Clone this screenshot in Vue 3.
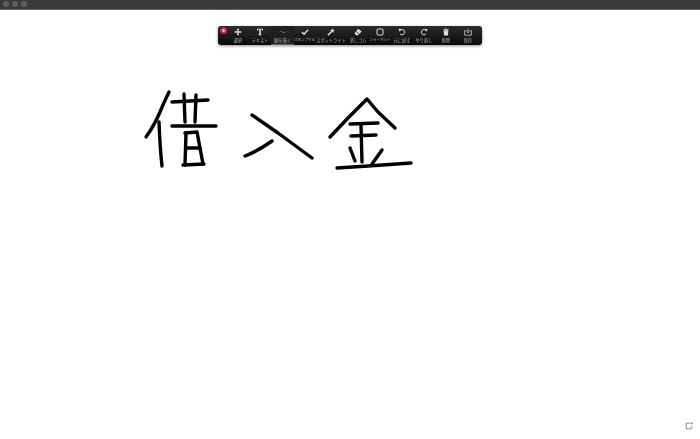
<script setup>
const tools = [
  { label: '選択', w: 22, icon: 'move' },
  { label: 'テキスト', w: 22, icon: 'text' },
  { label: '線を描く', w: 23, icon: 'draw', active: true },
  { label: 'スタンプする', w: 21, icon: 'check', size: 3.5 },
  { label: 'スポットライト', w: 32, icon: 'wand' },
  { label: '消しゴム', w: 22, icon: 'eraser' },
  { label: 'フォーマット', w: 22, icon: 'format', size: 3.5 },
  { label: '元に戻す', w: 22, icon: 'undo' },
  { label: 'やり直し', w: 22, icon: 'redo' },
  { label: '削除', w: 22, icon: 'trash' },
  { label: '保存', w: 22, icon: 'save' },
]
const strokes = [
  'M169 92 Q164 102 160 112 Q154 126 146 137',
  'M159 122 Q160 148 162 166',
  'M172 102 L208 100',
  'M184 94 L185 122',
  'M196 95 L195 122',
  'M172 126 L216 126',
  'M186 133 L185 165',
  'M185 133 L197 132 L203 164',
  'M187 148 L200 148',
  'M183 165 L204 164',
  'M252 115 L278 133 L312 158',
  'M245 156 Q258 151 272 141',
  'M330 137 L348 118 L367 99 L378 112 L395 128',
  'M350 124 L378 123',
  'M351 136 L376 135',
  'M361 125 L362 162',
  'M350 148 L355 161',
  'M382 150 L372 164',
  'M337 168 L368 166 L411 163',
]
</script>

<template>
  <div class="page">
    <header class="titlebar">
      <span class="light"></span>
      <span class="light"></span>
      <span class="light"></span>
    </header>
    <main class="board">
      <svg class="ink" viewBox="0 0 700 439" width="700" height="439">
        <path v-for="(d, i) in strokes" :key="i" :d="d" />
      </svg>
      <nav class="toolbar">
        <span class="rec"></span>
        <div
          v-for="t in tools"
          :key="t.label"
          class="tool"
          :class="{ active: t.active }"
          :style="{ width: t.w + 'px' }"
        >
          <svg class="icon" viewBox="0 0 12 12" width="8" height="8">
            <path v-if="t.icon === 'move'" class="fill" d="M6 0.5 L8 3 L7 3 L7 5 L9 5 L9 4 L11.5 6 L9 8 L9 7 L7 7 L7 9 L8 9 L6 11.5 L4 9 L5 9 L5 7 L3 7 L3 8 L0.5 6 L3 4 L3 5 L5 5 L5 3 L4 3 Z" />
            <path v-else-if="t.icon === 'text'" class="fill" d="M1.5 1 L10.5 1 L10.5 4 L9.6 4 C9.4 2.8 9 2.3 7.2 2.3 L7.2 9.5 L8.5 10.2 L8.5 11 L3.5 11 L3.5 10.2 L4.8 9.5 L4.8 2.3 C3 2.3 2.6 2.8 2.4 4 L1.5 4 Z" />
            <path v-else-if="t.icon === 'draw'" class="line blue" d="M0.5 6.5 C2 4.5 3.5 4.5 5 6 C6.5 7.5 8.5 7.5 11.5 5" />
            <path v-else-if="t.icon === 'check'" class="line thick" d="M1.5 6.2 L4.6 9.4 L10.5 2.5" />
            <g v-else-if="t.icon === 'wand'">
              <path class="line thick" d="M1.5 11 L6.5 5.5" />
              <path class="fill" d="M8 0.5 L9 2.6 L11.5 3 L9.7 4.7 L10 7 L8 6 L6 7 L6.4 4.6 L4.6 3 L7 2.6 Z" />
            </g>
            <g v-else-if="t.icon === 'eraser'">
              <path class="fill" d="M6.5 1 L11.5 5.2 L8 9 L3 5 Z" />
              <path class="fill dim" d="M2.5 5.5 L7.2 9.6 L6 10.8 L3.6 10.8 L0.8 7.8 Z" />
            </g>
            <rect v-else-if="t.icon === 'format'" class="line" x="1.5" y="1.5" width="9" height="9" rx="1.5" />
            <g v-else-if="t.icon === 'undo'">
              <path class="line" d="M3 3.5 A4 4 0 1 1 3 9" />
              <path class="fill" d="M0.8 1.2 L5.2 2 L2 5.6 Z" />
            </g>
            <g v-else-if="t.icon === 'redo'">
              <path class="line" d="M9 3.5 A4 4 0 1 0 9 9" />
              <path class="fill" d="M11.2 1.2 L6.8 2 L10 5.6 Z" />
            </g>
            <g v-else-if="t.icon === 'trash'">
              <path class="fill" d="M2.5 3.4 L9.5 3.4 L9 11.2 L3 11.2 Z" />
              <path class="fill" d="M2 1.6 L4.6 1.6 L5 0.8 L7 0.8 L7.4 1.6 L10 1.6 L10 2.7 L2 2.7 Z" />
            </g>
            <g v-else>
              <path class="line thin" d="M3.5 4 L1 4 L1 10.8 L11 10.8 L11 4 L8.5 4" />
              <path class="line thin" d="M6 0.8 L6 7 M4 5 L6 7.2 L8 5" />
            </g>
          </svg>
          <span class="label" :style="t.size ? { fontSize: t.size + 'px' } : null">{{ t.label }}</span>
        </div>
      </nav>
      <svg class="refresh" viewBox="0 0 10 10" width="8" height="8">
        <path d="M6 1.5 L1.5 1.5 L1.5 8.5 L8.5 8.5 L8.5 5" />
        <rect x="7" y="0.5" width="2.5" height="2.5" />
      </svg>
    </main>
  </div>
</template>

<style>
html, body { margin: 0; background: #fff; }
</style>

<style scoped>
.page {
  width: 700px;
  height: 439px;
  display: flex;
  flex-direction: column;
  overflow: hidden;
  font-family: "Noto Sans CJK JP", "Noto Sans", sans-serif;
}
.titlebar {
  height: 10px;
  flex: none;
  box-sizing: border-box;
  background: #3a3a3a;
  border-bottom: 1px solid #666;
  display: flex;
  align-items: center;
  gap: 3px;
  padding: 0 0 1px 3px;
}
.light {
  width: 6px;
  height: 6px;
  border-radius: 50%;
  background: #5e5e5e;
}
.board {
  position: relative;
  flex: 1;
  background: #fff;
}
.ink {
  position: absolute;
  left: 0;
  top: -10px;
}
.ink path {
  fill: none;
  stroke: #000;
  stroke-width: 3.4;
  stroke-linecap: round;
  stroke-linejoin: round;
}
.toolbar {
  position: absolute;
  left: 218px;
  top: 16px;
  width: 264px;
  height: 19px;
  box-sizing: border-box;
  padding-left: 9px;
  display: flex;
  border-radius: 3px;
  background: linear-gradient(#2c2c2c, #0a0a0a);
  box-shadow: 0 1px 3px rgba(0, 0, 0, 0.45);
  filter: blur(0.35px);
}
.rec {
  position: absolute;
  left: 2px;
  top: 1px;
  box-sizing: border-box;
  width: 7px;
  height: 7px;
  border-radius: 50%;
  background: #ffc8c8;
  border: 2px solid #d8202e;
}
.tool {
  display: flex;
  flex-direction: column;
  align-items: center;
  gap: 1px;
  padding-top: 2px;
  box-sizing: border-box;
  flex: none;
  height: 19px;
}
.tool.active {
  background: #1f1f1f;
  border-bottom: 1px solid #6a6a6a;
}
.icon {
  display: block;
  flex: none;
}
.fill { fill: #dcdcdc; }
.fill.dim { fill: #f0f0f0; }
.line {
  fill: none;
  stroke: #dcdcdc;
  stroke-width: 1.5;
}
.line.thick { stroke-width: 2.2; }
.line.thin { stroke-width: 1.1; }
.line.blue { stroke: #2f7fb8; stroke-width: 1.5; }
.label {
  font-size: 4.2px;
  line-height: 6px;
  color: #b0b0b0;
  white-space: nowrap;
}
.refresh {
  position: absolute;
  right: 7px;
  bottom: 9px;
}
.refresh path {
  fill: none;
  stroke: #8a8a8a;
  stroke-width: 1.2;
}
.refresh rect { fill: #8a8a8a; }
</style>
